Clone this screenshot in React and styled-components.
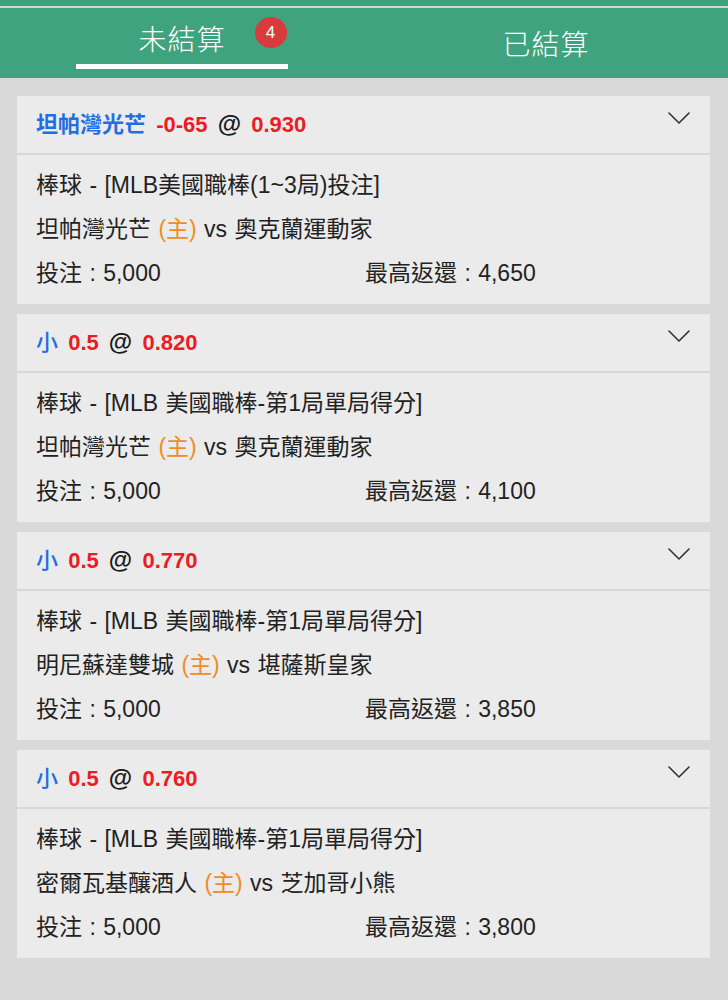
import React from "react";
import styled, { createGlobalStyle } from "styled-components";

const GlobalStyle = createGlobalStyle`
  html, body {
    margin: 0;
    padding: 0;
    background: #d9d9d9;
  }
  body {
    font-family: "Liberation Sans", "Noto Sans CJK TC", sans-serif;
    color: #222;
  }
`;

const Page = styled.div`
  width: 728px;
  min-height: 1000px;
  background: #d9d9d9;
`;

const TopBar = styled.header`
  background: #40a37f;
  padding-top: 6px;
`;

const Tabs = styled.nav`
  display: flex;
  height: 70px;
  border-top: 2px solid #c9dcd4;
`;

const Tab = styled.div`
  flex: 1;
  display: flex;
  flex-direction: column;
  align-items: center;
  justify-content: ${(p) => (p.$active ? "flex-end" : "center")};
  padding-bottom: ${(p) => (p.$active ? "9px" : "0")};
  box-sizing: border-box;
`;

const TabLabel = styled.div`
  position: relative;
  font-family: "Noto Sans CJK TC", sans-serif;
  font-weight: 300;
  font-size: 28px;
  line-height: 34px;
  color: #fff;
  letter-spacing: 1px;
`;

const Badge = styled.span`
  position: absolute;
  left: calc(100% + 29px);
  top: -4px;
  width: 32px;
  height: 31px;
  border-radius: 50%;
  background: #d83b3b;
  color: #fff;
  font-family: "Liberation Sans", sans-serif;
  font-size: 17px;
  line-height: 31px;
  text-align: center;
  letter-spacing: 0;
`;

const Underline = styled.div`
  width: 212px;
  height: 5px;
  margin-top: 9px;
  background: #fff;
`;

const List = styled.main`
  display: flex;
  flex-direction: column;
  gap: 10px;
  padding: 18px 18px 0 17px;
`;

const Card = styled.section`
  background: #ebebeb;
`;

const CardHead = styled.div`
  height: 57px;
  display: flex;
  align-items: center;
  justify-content: space-between;
  padding: 0 20px 0 19px;
  border-bottom: 2px solid #d7d7d7;
`;

const Title = styled.div`
  font-size: 22px;
  font-weight: 700;
  line-height: 30px;
  word-spacing: 4px;
  white-space: nowrap;
`;

const Team = styled.span`
  color: #1e6fe3;
  font-weight: ${(p) => (p.$light ? 500 : 700)};
`;

const Red = styled.span`
  color: #ec1b24;
`;

const At = styled.span`
  color: #1a1a1a;
  font-size: 24px;
`;

const Chevron = styled.svg`
  align-self: flex-start;
  margin-top: 16px;
  width: 22px;
  height: 12px;
`;

const CardBody = styled.div`
  padding: 8px 19px 9px;
  font-size: 23px;
  line-height: 44px;
  word-spacing: 1px;
  color: #222;
`;

const Line = styled.div`
  white-space: nowrap;
`;

const Home = styled.span`
  color: #f18b22;
`;

const AmountRow = styled.div`
  display: grid;
  grid-template-columns: 329px 1fr;
`;

const bets = [
  {
    team: "坦帕灣光芒",
    light: false,
    line: "-0-65",
    odds: "0.930",
    league: "棒球 - [MLB美國職棒(1~3局)投注]",
    home: "坦帕灣光芒",
    away: "奧克蘭運動家",
    stake: "5,000",
    ret: "4,650",
  },
  {
    team: "小",
    light: true,
    line: "0.5",
    odds: "0.820",
    league: "棒球 - [MLB 美國職棒-第1局單局得分]",
    home: "坦帕灣光芒",
    away: "奧克蘭運動家",
    stake: "5,000",
    ret: "4,100",
  },
  {
    team: "小",
    light: true,
    line: "0.5",
    odds: "0.770",
    league: "棒球 - [MLB 美國職棒-第1局單局得分]",
    home: "明尼蘇達雙城",
    away: "堪薩斯皇家",
    stake: "5,000",
    ret: "3,850",
  },
  {
    team: "小",
    light: true,
    line: "0.5",
    odds: "0.760",
    league: "棒球 - [MLB 美國職棒-第1局單局得分]",
    home: "密爾瓦基釀酒人",
    away: "芝加哥小熊",
    stake: "5,000",
    ret: "3,800",
  },
];

export default function App() {
  return (
    <Page>
      <GlobalStyle />
      <TopBar>
        <Tabs>
          <Tab $active>
            <TabLabel>
              未結算
              <Badge>4</Badge>
            </TabLabel>
            <Underline />
          </Tab>
          <Tab>
            <TabLabel>已結算</TabLabel>
          </Tab>
        </Tabs>
      </TopBar>
      <List>
        {bets.map((b, i) => (
          <Card key={i}>
            <CardHead>
              <Title>
                <Team $light={b.light}>{b.team}</Team> <Red>{b.line}</Red>{" "}
                <At>@</At> <Red>{b.odds}</Red>
              </Title>
              <Chevron viewBox="0 0 22 12" fill="none">
                <path
                  d="M1 1 L11 11 L21 1"
                  stroke="#333"
                  strokeWidth="1.6"
                  strokeLinecap="round"
                  strokeLinejoin="round"
                />
              </Chevron>
            </CardHead>
            <CardBody>
              <Line>{b.league}</Line>
              <Line>
                {b.home} <Home>(主)</Home> vs {b.away}
              </Line>
              <AmountRow>
                <span>投注 : {b.stake}</span>
                <span>最高返還 : {b.ret}</span>
              </AmountRow>
            </CardBody>
          </Card>
        ))}
      </List>
    </Page>
  );
}
